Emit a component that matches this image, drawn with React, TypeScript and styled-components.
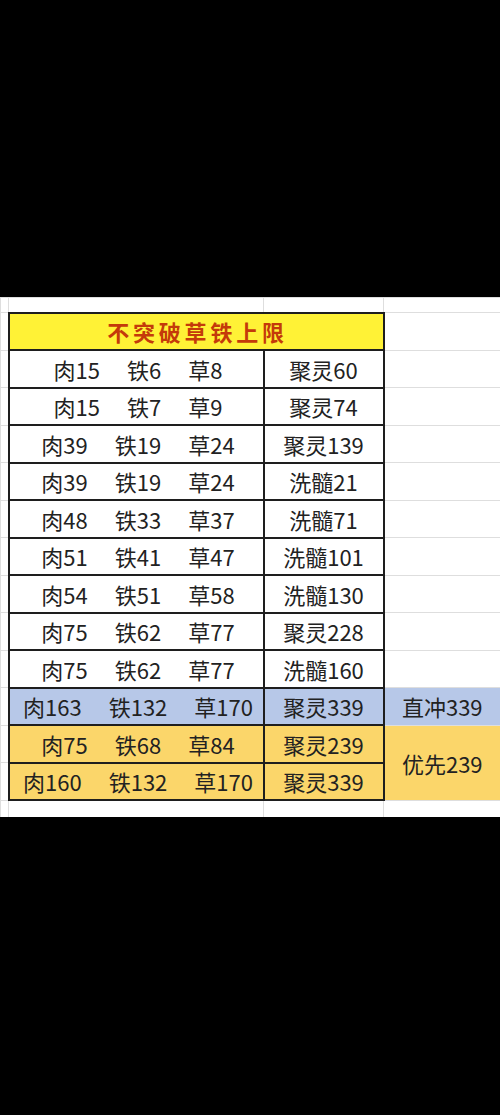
import React from "react"
import styled, { createGlobalStyle } from "styled-components"

const GlobalStyle = createGlobalStyle`
  html, body {
    margin: 0;
    padding: 0;
    background: #000;
  }
  body {
    width: 500px;
    height: 1115px;
    overflow: hidden;
    font-family: "Noto Sans CJK SC", "Noto Sans", sans-serif;
  }
`

const Screen = styled.div`
  width: 500px;
  height: 1115px;
  background: #000;
  display: flex;
  flex-direction: column;
  padding-top: 297px;
  box-sizing: border-box;
`

const Sheet = styled.div`
  width: 500px;
  height: 520px;
  background: #fff;
  overflow: hidden;
`

const Grid = styled.table`
  width: 500px;
  table-layout: fixed;
  border-collapse: collapse;
  border-spacing: 0;
`

const Row = styled.tr<{ $h: number }>`
  height: ${p => p.$h}px;
`

const Cell = styled.td<{ $bg?: string; $strong?: boolean }>`
  padding: 0;
  border: 1px solid #dedede;
  ${p => (p.$strong ? "border: 2px solid #1e1e1e;" : "")}
  background: ${p => p.$bg || "transparent"};
  color: #222;
  font-size: 22px;
  line-height: 1;
  text-align: center;
  vertical-align: middle;
  white-space: nowrap;
`

const Title = styled.span`
  color: #c43a0a;
  font-weight: 700;
  font-size: 22px;
  letter-spacing: 3.8px;
  padding-left: 3px;
`

const Trio = styled.div`
  display: flex;
  justify-content: center;
  gap: 27px;
  padding-left: 4px;
`

const BLUE = "#b7c8e8"
const GOLD = "#fbd66a"
const YELLOW = "#fff236"

type Line = { a: string; b: string; c: string; d: string }

const rows: Line[] = [
  { a: "肉15", b: "铁6", c: "草8", d: "聚灵60" },
  { a: "肉15", b: "铁7", c: "草9", d: "聚灵74" },
  { a: "肉39", b: "铁19", c: "草24", d: "聚灵139" },
  { a: "肉39", b: "铁19", c: "草24", d: "洗髓21" },
  { a: "肉48", b: "铁33", c: "草37", d: "洗髓71" },
  { a: "肉51", b: "铁41", c: "草47", d: "洗髓101" },
  { a: "肉54", b: "铁51", c: "草58", d: "洗髓130" },
  { a: "肉75", b: "铁62", c: "草77", d: "聚灵228" },
  { a: "肉75", b: "铁62", c: "草77", d: "洗髓160" },
]

const RH = 37.5

const Stats: React.FC<{ line: Line }> = ({ line }) => (
  <Trio>
    <span>{line.a}</span>
    <span>{line.b}</span>
    <span>{line.c}</span>
  </Trio>
)

const App: React.FC = () => {
  return (
    <Screen>
      <GlobalStyle />
      <Sheet>
        <Grid>
          <colgroup>
            <col style={{ width: 8 }} />
            <col style={{ width: 255 }} />
            <col style={{ width: 120 }} />
            <col style={{ width: 117 }} />
          </colgroup>
          <tbody>
            <Row $h={15}>
              <Cell />
              <Cell />
              <Cell />
              <Cell />
            </Row>
            <Row $h={RH}>
              <Cell />
              <Cell $strong $bg={YELLOW} colSpan={2}>
                <Title>不突破草铁上限</Title>
              </Cell>
              <Cell />
            </Row>
            {rows.map((line, i) => (
              <Row $h={RH} key={i}>
                <Cell />
                <Cell $strong>
                  <Stats line={line} />
                </Cell>
                <Cell $strong>{line.d}</Cell>
                <Cell />
              </Row>
            ))}
            <Row $h={RH}>
              <Cell />
              <Cell $strong $bg={BLUE}>
                <Stats line={{ a: "肉163", b: "铁132", c: "草170", d: "" }} />
              </Cell>
              <Cell $strong $bg={BLUE}>聚灵339</Cell>
              <Cell $bg={BLUE}>直冲339</Cell>
            </Row>
            <Row $h={RH}>
              <Cell />
              <Cell $strong $bg={GOLD}>
                <Stats line={{ a: "肉75", b: "铁68", c: "草84", d: "" }} />
              </Cell>
              <Cell $strong $bg={GOLD}>聚灵239</Cell>
              <Cell $bg={GOLD} rowSpan={2}>优先239</Cell>
            </Row>
            <Row $h={RH}>
              <Cell />
              <Cell $strong $bg={GOLD}>
                <Stats line={{ a: "肉160", b: "铁132", c: "草170", d: "" }} />
              </Cell>
              <Cell $strong $bg={GOLD}>聚灵339</Cell>
            </Row>
            <Row $h={18}>
              <Cell />
              <Cell />
              <Cell />
              <Cell />
            </Row>
          </tbody>
        </Grid>
      </Sheet>
    </Screen>
  )
}

export default App
